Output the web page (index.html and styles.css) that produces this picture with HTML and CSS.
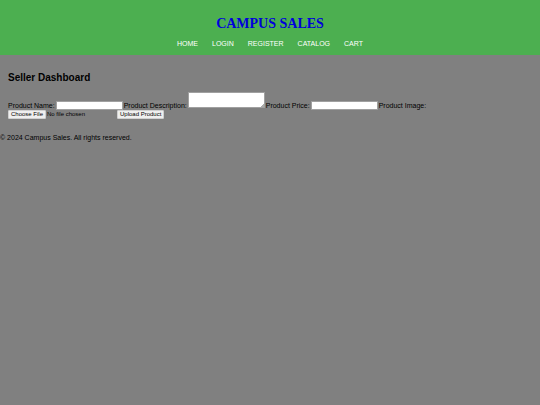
FILE: index.html
```html
<!DOCTYPE html>
<html lang="en">
<head>
<meta charset="utf-8">
<title>Campus Sales - Seller Dashboard</title>
<link rel="stylesheet" href="styles.css">
</head>
<body>
<header class="site-header">
  <h1 class="brand">CAMPUS SALES</h1>
  <nav>
    <ul class="nav-list">
      <li><a href="#">HOME</a></li>
      <li><a href="#">LOGIN</a></li>
      <li><a href="#">REGISTER</a></li>
      <li><a href="#">CATALOG</a></li>
      <li><a href="#">CART</a></li>
    </ul>
  </nav>
</header>
<main class="dashboard">
  <h2 class="dashboard-title">Seller Dashboard</h2>
  <form class="product-form">
    <label for="name">Product Name:</label>
    <input class="field" type="text" id="name">
    <label for="description">Product Description:</label>
    <textarea class="description" id="description"></textarea>
    <label for="price">Product Price:</label>
    <input class="field" type="text" id="price">
    <label for="image">Product Image:</label>
    <input class="file" type="file" id="image">
    <button class="upload" type="submit">Upload Product</button>
  </form>
</main>
<footer class="site-footer">© 2024 Campus Sales. All rights reserved.</footer>
</body>
</html>
```
FILE: styles.css
```css
* {
  box-sizing: border-box;
}

body {
  margin: 0;
  background: #808080;
  color: #000;
  font: 7px/8px "Liberation Sans", Arial, sans-serif;
}

.site-header {
  padding: 16px 8px 7px;
  background: #4caf50;
  text-align: center;
}

.brand {
  margin: 0 0 8px;
  color: #0000dc;
  font: bold 14px/16px "Liberation Serif", "Times New Roman", serif;
}

.nav-list {
  display: flex;
  justify-content: center;
  gap: 14px;
  margin: 0;
  padding: 0;
  list-style: none;
}

.nav-list a {
  color: #fff;
  text-decoration: none;
}

.dashboard {
  padding: 17px 8px 15px;
}

.dashboard-title {
  margin: 0 0 8px;
  font-size: 10px;
  line-height: 12px;
}

.product-form {
  display: flex;
  flex-wrap: wrap;
  align-items: flex-end;
  column-gap: 1px;
}

.field,
.description {
  border: 1px solid #a0a0a0;
  background: #fff;
  font-size: 6px;
}

.field {
  width: 67px;
  height: 9px;
  padding: 0;
}

.description {
  width: 77px;
  height: 16px;
  margin-bottom: 2px;
  padding: 1px;
}

.description::-webkit-resizer {
  background: linear-gradient(135deg, transparent 88%, #aaa 88%);
}

.file {
  width: 108px;
  font: 6px/7px "Liberation Sans", Arial, sans-serif;
}

.file::file-selector-button,
.upload {
  padding: 0 2px;
  border: 1px solid #d0d0d0;
  border-radius: 1px;
  background: #efefef;
  color: #000;
  font: 6px/7px "Liberation Sans", Arial, sans-serif;
}

.file::file-selector-button {
  margin-right: 1px;
}

.site-footer {
  padding-bottom: 8px;
}
```
